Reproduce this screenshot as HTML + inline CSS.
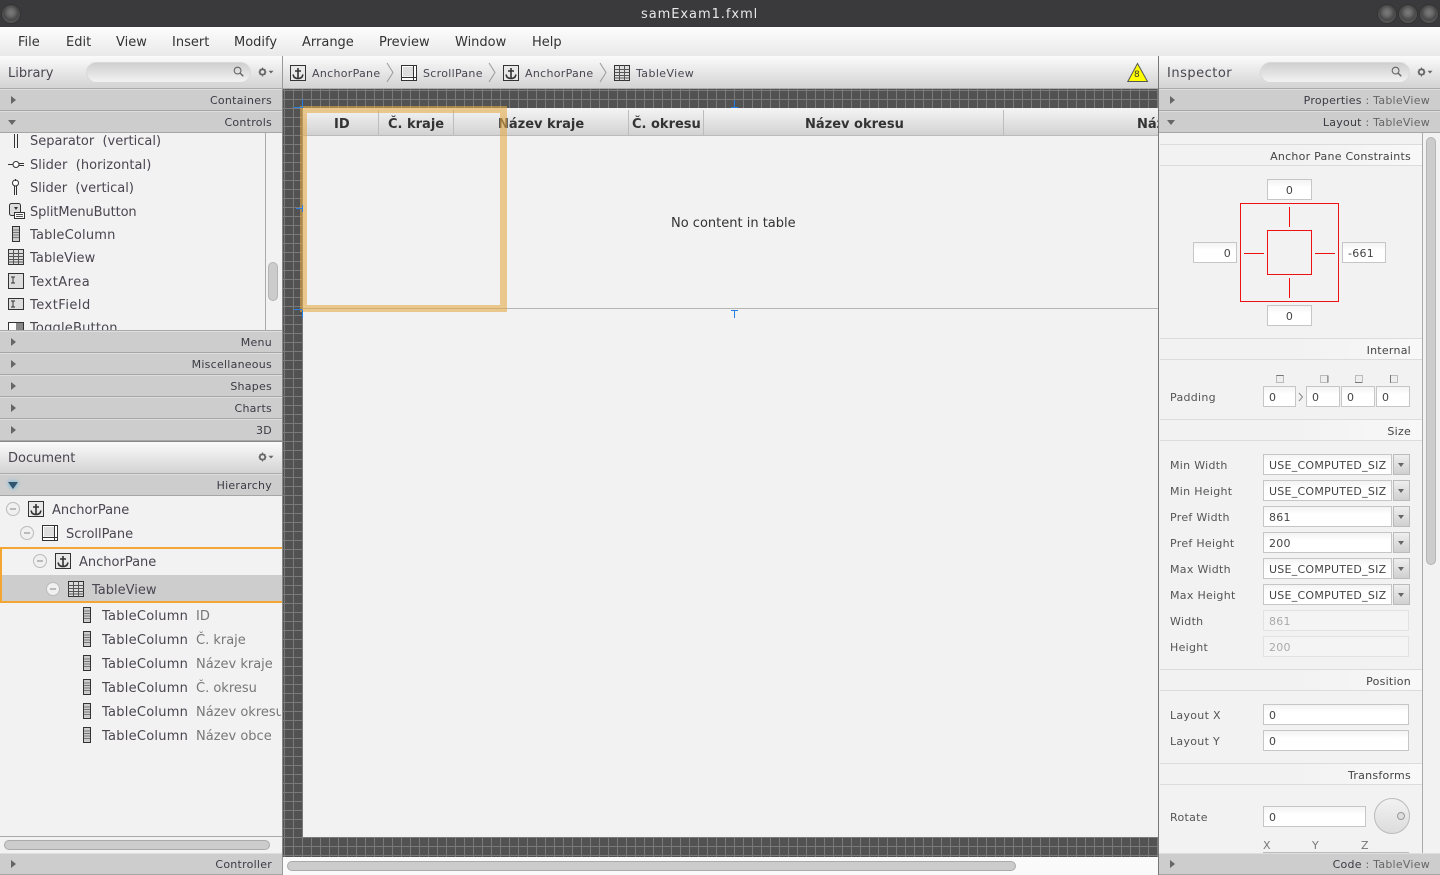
<!DOCTYPE html>
<html><head><meta charset="utf-8"><title>samExam1.fxml</title>
<style>
html,body{margin:0;padding:0;width:1440px;height:875px;overflow:hidden;background:#f2f2f2}
body{position:relative;font-family:"DejaVu Sans","Liberation Sans",sans-serif;color:#444}
div,span,svg{position:absolute;box-sizing:border-box}
.t{white-space:nowrap;font-size:13px;line-height:16px;color:#4a4550;margin-top:2px}
.m{top:33px;color:#333}
.sec{left:0;width:282px;height:22px;background:#cdcdcd;border-top:1px solid #dedede;border-bottom:1px solid #a6a6a6}
.sec .l{right:10px;top:4px;font-size:11px;line-height:14px;letter-spacing:.25px;white-space:nowrap;color:#3a3a44}
.sec .l i{font-style:normal;color:#666}
.tri{left:11px;top:6px;width:0;height:0;border-left:5px solid #666;border-top:4px solid transparent;border-bottom:4px solid transparent}
.trd{left:8px;top:8px;width:0;height:0;border-top:5px solid #666;border-left:4px solid transparent;border-right:4px solid transparent}
.hdr{background:linear-gradient(#fbfbfb,#d3d3d3);border-bottom:1px solid #aaa}
.search{height:21px;border:1px solid #d8d8d8;border-radius:11px;background:linear-gradient(#cfcfcf,#f2f2f2)}
.tb{top:117px;font-size:13px;font-weight:bold;color:#333;white-space:nowrap;line-height:16px}
.cs{top:110px;width:1px;height:25px;background:#bdbdbd}
.grp{left:1160px;width:262px;height:22px;background:linear-gradient(90deg,#f2f2f2 50%,#f8f8f8);border-top:1px solid #dcdcdc;border-bottom:1px solid #dcdcdc}
.grp span{right:11px;top:5px;font-size:11px;line-height:14px;letter-spacing:.25px;color:#444;white-space:nowrap}
.f{position:absolute;height:21px;background:linear-gradient(#f3f3f3,#fff 40%);border:1px solid #c6c6c6;font-size:11px;line-height:21px;padding-left:5px;color:#444;letter-spacing:.25px;white-space:nowrap;overflow:hidden}
.lb{left:1170px;margin-top:1px;font-size:11px;line-height:14px;color:#555;letter-spacing:.3px;white-space:nowrap}
.dd{left:1393px;width:17px;height:21px;background:linear-gradient(#eee,#d0d0d0);border:1px solid #bbb}
.dd:after{content:"";position:absolute;left:4px;top:8px;border-top:4px solid #666;border-left:3px solid transparent;border-right:3px solid transparent}
.dis{background:#f4f4f4;border-color:#e2e2e2;color:#aaa}
.red{background:#f00f0f}
.minus{width:14px;height:14px;border-radius:50%;border:1px solid #bbb;background:#f0f0f0}
.minus:after{content:"";position:absolute;left:3px;top:5px;width:6px;height:2px;background:#bbb}
.wb{top:4px;width:20px;height:20px;border-radius:50%;background:radial-gradient(circle at 50% 42%,#7c7c7c 0,#686868 28%,#484848 52%,#565656 74%,#4a4a4a 100%);border:1px solid #333}
.s0 span{letter-spacing:0}
</style></head>
<body>
<svg width="0" height="0" style="left:0;top:0">
<defs>
<symbol id="anc" viewBox="0 0 16 16"><rect x=".5" y=".5" width="15" height="15" fill="#e8e8e8" stroke="#333"/><path d="M8 3v10M5 6h6M3 9.500l1 2.500c1 1 3 1.500 4 1.500s3-.5 4-1.500l1-2.500" fill="none" stroke="#333" stroke-width="1.600"/></symbol>
<symbol id="scr" viewBox="0 0 16 16"><rect x=".5" y=".5" width="15" height="15" fill="#fff" stroke="#333"/><rect x="2" y="2" width="10" height="9.500" fill="#ddd"/><path d="M12.500 1v14M1 12.500h14" stroke="#333" fill="none"/></symbol>
<symbol id="tbl" viewBox="0 0 16 16"><rect x=".5" y=".5" width="15" height="15" fill="#ddd" stroke="#333"/><path d="M.5 4.500h15M.5 7.500h15M.5 10.500h15M.5 13h15M5.500 .5v15M10.500 .5v15" stroke="#555" fill="none"/></symbol>
<symbol id="col" viewBox="0 0 8 16"><rect x=".5" y=".5" width="7" height="15" fill="#ccc" stroke="#333"/><path d="M1 4h6M1 6.500h6M1 9h6M1 11.500h6" stroke="#777" fill="none"/></symbol>
<symbol id="gear" viewBox="0 0 16 10"><circle cx="4.500" cy="5" r="2.700" fill="none" stroke="#666" stroke-width="1.800"/><path d="M4.500 .5v1.500M4.500 8v1.500M.5 5h1.500M7 5h1.500M1.700 2.200l1 1M6.300 6.800l1 1M7.300 2.200l-1 1M2.700 6.800l-1 1" stroke="#666" stroke-width="1.100"/><path d="M10.500 3.800h5l-2.500 2.700z" fill="#666"/></symbol>
<symbol id="mag" viewBox="0 0 12 12"><circle cx="5" cy="5" r="3.700" fill="none" stroke="#666" stroke-width="1.200"/><path d="M7.800 7.800l3.400 3.400" stroke="#666" stroke-width="1.600"/></symbol>
</defs></svg>

<!-- title bar -->
<div style="left:0;top:0;width:1440px;height:27px;background:#3a3a3c"></div>
<div class="t" style="left:641px;top:5px;color:#e8e8e8;letter-spacing:.95px">samExam1.fxml</div>
<div class="wb" style="left:1px"></div>
<div class="wb" style="left:1377px"></div><div class="wb" style="left:1398px"></div><div class="wb" style="left:1419px"></div>

<!-- menu -->
<div style="left:0;top:27px;width:1440px;height:29px;background:linear-gradient(#fdfdfd,#e9e9e9)"></div>
<div class="t m" style="left:18px">File</div>
<div class="t m" style="left:66px">Edit</div>
<div class="t m" style="left:116px">View</div>
<div class="t m" style="left:172px">Insert</div>
<div class="t m" style="left:234px">Modify</div>
<div class="t m" style="left:302px">Arrange</div>
<div class="t m" style="left:379px">Preview</div>
<div class="t m" style="left:455px">Window</div>
<div class="t m" style="left:532px">Help</div>

<!-- left panel -->
<div style="left:0;top:56px;width:282px;height:819px;background:#f2f2f2"></div>
<div class="hdr" style="left:0;top:56px;width:282px;height:33px"></div>
<div class="t" style="left:8px;top:64px">Library</div>
<div class="search" style="left:86px;top:62px;width:165px"></div>
<svg style="left:233px;top:66px" width="11" height="11"><use href="#mag"/></svg>
<svg style="left:258px;top:67px" width="16" height="10"><use href="#gear"/></svg>

<div style="left:265px;top:133px;width:1px;height:198px;background:#aaa"></div>
<div style="left:268px;top:262px;width:10px;height:39px;border-radius:5px;background:#ccc;border:1px solid #b5b5b5"></div>

<div style="left:14px;top:134px;width:4px;height:14px;border-left:1px solid #333;border-right:1px solid #333"></div>
<div class="t" style="left:30px;top:132px">Separator&nbsp; (vertical)</div>
<svg style="left:8px;top:160px" width="16" height="9"><circle cx="8" cy="4.500" r="3" fill="#fff" stroke="#333"/><path d="M0 4.500h5M11 3.500h5M11 5.500h5" stroke="#333" fill="none"/></svg>
<div class="t" style="left:30px;top:156px;letter-spacing:.05px">Slider&nbsp; (horizontal)</div>
<svg style="left:11px;top:179px" width="9" height="16"><circle cx="4.500" cy="4" r="3" fill="#fff" stroke="#333"/><path d="M3.500 7v9M5.500 7v9M4.500 0v2" stroke="#333" fill="none"/></svg>
<div class="t" style="left:30px;top:179px">Slider&nbsp; (vertical)</div>
<svg style="left:9px;top:203px" width="16" height="16"><rect x=".5" y=".5" width="11" height="12" rx="2" fill="#ddd" stroke="#333"/><path d="M5 4h4l-2 3z" fill="#333"/><rect x="5.500" y="9.500" width="10" height="6" fill="#fff" stroke="#333"/><path d="M7 11.500h7M7 13.500h7" stroke="#555"/></svg>
<div class="t" style="left:30px;top:203px;letter-spacing:-.1px">SplitMenuButton</div>
<svg style="left:12px;top:226px" width="8" height="16"><use href="#col"/></svg>
<div class="t" style="left:30px;top:226px;letter-spacing:.2px">TableColumn</div>
<svg style="left:8px;top:249px" width="16" height="16"><use href="#tbl"/></svg>
<div class="t" style="left:30px;top:249px;letter-spacing:.1px">TableView</div>
<svg style="left:8px;top:273px" width="16" height="16"><rect x=".5" y=".5" width="15" height="15" fill="#ddd" stroke="#333"/><path d="M3 4h4M3 10h4M5 4v6" stroke="#333" fill="none"/></svg>
<div class="t" style="left:30px;top:273px;letter-spacing:.5px">TextArea</div>
<svg style="left:8px;top:298px" width="16" height="12"><rect x=".5" y=".5" width="15" height="11" fill="#ddd" stroke="#333"/><path d="M3 3h4M3 9h4M5 3v6" stroke="#333" fill="none"/></svg>
<div class="t" style="left:30px;top:296px;letter-spacing:.5px">TextField</div>
<svg style="left:8px;top:322px" width="16" height="9"><rect x=".5" y=".5" width="15" height="14" fill="#fff" stroke="#333"/><rect x="8" y="1" width="7" height="13" fill="#888"/></svg>
<div style="left:0;top:320px;width:265px;height:11px;overflow:hidden"><div class="t" style="left:30px;top:-1px;letter-spacing:.2px">ToggleButton</div></div>
<div style="left:0;top:330px;width:282px;height:1px;background:#aaa"></div>

<div class="sec" style="top:89px"><div class="tri"></div><div class="l">Containers</div></div>
<div class="sec" style="top:111px"><div class="trd"></div><div class="l">Controls</div></div>
<div class="sec" style="top:331px"><div class="tri"></div><div class="l">Menu</div></div>
<div class="sec" style="top:353px"><div class="tri"></div><div class="l">Miscellaneous</div></div>
<div class="sec" style="top:375px"><div class="tri"></div><div class="l">Shapes</div></div>
<div class="sec" style="top:397px"><div class="tri"></div><div class="l">Charts</div></div>
<div class="sec" style="top:419px"><div class="tri"></div><div class="l">3D</div></div>

<div class="hdr" style="left:0;top:441px;width:282px;height:33px;border-top:1px solid #888"></div>
<div class="t" style="left:8px;top:449px">Document</div>
<svg style="left:258px;top:452px" width="16" height="10"><use href="#gear"/></svg>
<div class="sec" style="top:474px"><div style="left:8px;top:7px;border-top:7px solid #33566e;border-left:5px solid transparent;border-right:5px solid transparent;filter:drop-shadow(0 0 2px #3fb0e8)"></div><div class="l">Hierarchy</div></div>

<div class="minus" style="left:6px;top:502px"></div>
<svg style="left:28px;top:501px" width="16" height="16"><use href="#anc"/></svg>
<div class="t" style="left:52px;top:501px">AnchorPane</div>
<div class="minus" style="left:20px;top:526px"></div>
<svg style="left:42px;top:525px" width="16" height="16"><use href="#scr"/></svg>
<div class="t" style="left:66px;top:525px">ScrollPane</div>
<div style="left:0;top:575px;width:282px;height:27px;background:#cdcdcd"></div>
<div style="left:0;top:547px;width:282px;height:56px;border:2px solid #f3a632;border-right:0"></div>
<div class="minus" style="left:33px;top:554px"></div>
<svg style="left:55px;top:553px" width="16" height="16"><use href="#anc"/></svg>
<div class="t" style="left:79px;top:553px">AnchorPane</div>
<div class="minus" style="left:46px;top:582px"></div>
<svg style="left:68px;top:581px" width="16" height="16"><use href="#tbl"/></svg>
<div class="t" style="left:92px;top:581px">TableView</div>

<svg style="left:83px;top:607px" width="8" height="16"><use href="#col"/></svg>
<div class="t s0" style="left:102px;top:607px;letter-spacing:.25px">TableColumn<span style="left:94px;top:0;color:#777">ID</span></div>
<svg style="left:83px;top:631px" width="8" height="16"><use href="#col"/></svg>
<div class="t s0" style="left:102px;top:631px;letter-spacing:.25px">TableColumn<span style="left:94px;top:0;color:#777">Č. kraje</span></div>
<svg style="left:83px;top:655px" width="8" height="16"><use href="#col"/></svg>
<div class="t s0" style="left:102px;top:655px;letter-spacing:.25px">TableColumn<span style="left:94px;top:0;color:#777">Název kraje</span></div>
<svg style="left:83px;top:679px" width="8" height="16"><use href="#col"/></svg>
<div class="t s0" style="left:102px;top:679px;letter-spacing:.25px">TableColumn<span style="left:94px;top:0;color:#777">Č. okresu</span></div>
<svg style="left:83px;top:703px" width="8" height="16"><use href="#col"/></svg>
<div style="left:0;top:700px;width:281px;height:24px;overflow:hidden"><div class="t s0" style="left:102px;top:3px;letter-spacing:.25px">TableColumn<span style="left:94px;top:0;color:#777">Název okresu</span></div></div>
<svg style="left:83px;top:727px" width="8" height="16"><use href="#col"/></svg>
<div class="t s0" style="left:102px;top:727px;letter-spacing:.25px">TableColumn<span style="left:94px;top:0;color:#777">Název obce</span></div>

<div style="left:0;top:836px;width:282px;height:18px;border-top:1px solid #aaa;background:#f2f2f2"></div>
<div style="left:4px;top:840px;width:266px;height:10px;border-radius:5px;background:#ccc;border:1px solid #aaa"></div>
<div class="sec" style="top:853px"><div class="tri"></div><div class="l">Controller</div></div>

<!-- center -->
<div class="hdr" style="left:282px;top:56px;width:877px;height:33px;border-left:1px solid #999"></div>
<svg style="left:290px;top:65px" width="16" height="16"><use href="#anc"/></svg>
<div class="t" style="left:312px;top:65px;font-size:11px;line-height:14px;letter-spacing:.3px">AnchorPane</div>
<svg style="left:386px;top:62px" width="8" height="21"><path d="M1 1l6 9.500-6 9.500" fill="none" stroke="#999"/></svg>
<svg style="left:401px;top:65px" width="16" height="16"><use href="#scr"/></svg>
<div class="t" style="left:423px;top:65px;font-size:11px;line-height:14px;letter-spacing:.3px">ScrollPane</div>
<svg style="left:488px;top:62px" width="8" height="21"><path d="M1 1l6 9.500-6 9.500" fill="none" stroke="#999"/></svg>
<svg style="left:503px;top:65px" width="16" height="16"><use href="#anc"/></svg>
<div class="t" style="left:525px;top:65px;font-size:11px;line-height:14px;letter-spacing:.3px">AnchorPane</div>
<svg style="left:599px;top:62px" width="8" height="21"><path d="M1 1l6 9.500-6 9.500" fill="none" stroke="#999"/></svg>
<svg style="left:614px;top:65px" width="16" height="16"><use href="#tbl"/></svg>
<div class="t" style="left:636px;top:65px;font-size:11px;line-height:14px;letter-spacing:.4px">TableView</div>
<svg style="left:1127px;top:62px" width="22" height="21"><path d="M10.500 1.500L20.500 19.500H.8z" fill="#ff0" stroke="#555"/></svg>
<div class="t" style="left:1134px;top:67px;font-size:9px;line-height:12px;color:#333">8</div>

<!-- workspace -->
<div style="left:282px;top:89px;width:877px;height:768px;border-left:1px solid #888;background-color:#525252;background-image:linear-gradient(#7a7a7a 1px,transparent 1px),linear-gradient(90deg,#7a7a7a 1px,transparent 1px);background-size:9px 9px;background-position:1px 1px"></div>
<div style="left:303px;top:108px;width:856px;height:729px;background:#f2f2f2"></div>
<div style="left:303px;top:110px;width:856px;height:26px;background:linear-gradient(#f2f2f2,#d2d2d2);border-bottom:1px solid #bbb"></div>
<div class="cs" style="left:378px"></div><div class="cs" style="left:453px"></div><div class="cs" style="left:628px"></div><div class="cs" style="left:703px"></div><div class="cs" style="left:1003px"></div>
<div class="tb" style="left:334px">ID</div>
<div class="tb" style="left:388px">Č. kraje</div>
<div class="tb" style="left:498px">Název kraje</div>
<div class="tb" style="left:632px">Č. okresu</div>
<div class="tb" style="left:805px">Název okresu</div>
<div class="tb" style="left:1137px;width:21px;overflow:hidden">Název obce</div>
<div class="t" style="left:671px;top:214px;color:#333">No content in table</div>
<div style="left:303px;top:308px;width:856px;height:1px;background:#b5b5b5"></div>
<div style="left:300px;top:106px;width:207px;height:206px;border:7px solid rgba(229,172,73,.6)"></div>
<div style="left:302px;top:99px;width:1px;height:9px;background:#2a7de0"></div>
<div style="left:294px;top:107px;width:8px;height:1px;background:#2a7de0"></div>
<div style="left:734px;top:100px;width:1px;height:8px;background:#2a7de0"></div>
<div style="left:731px;top:107px;width:7px;height:1px;background:#2a7de0"></div>
<div style="left:296px;top:208px;width:7px;height:1px;background:#2a7de0"></div>
<div style="left:302px;top:205px;width:1px;height:7px;background:#2a7de0"></div>
<div style="left:734px;top:310px;width:1px;height:8px;background:#2a7de0"></div>
<div style="left:731px;top:310px;width:7px;height:1px;background:#2a7de0"></div>
<div style="left:294px;top:309px;width:8px;height:1px;background:#2a7de0"></div>
<div style="left:302px;top:310px;width:1px;height:8px;background:#2a7de0"></div>

<div style="left:282px;top:857px;width:877px;height:18px;background:#fafafa;border-left:1px solid #999"></div>
<div style="left:287px;top:861px;width:729px;height:10px;border-radius:5px;background:#ccc;border:1px solid #aaa"></div>

<!-- inspector -->
<div style="left:1158px;top:56px;width:282px;height:819px;background:#f2f2f2;border-left:1px solid #777"></div>
<div class="hdr" style="left:1159px;top:56px;width:281px;height:33px"></div>
<div class="t" style="left:1167px;top:64px;letter-spacing:.5px">Inspector</div>
<div class="search" style="left:1260px;top:62px;width:150px"></div>
<svg style="left:1391px;top:66px" width="11" height="11"><use href="#mag"/></svg>
<svg style="left:1417px;top:67px" width="16" height="10"><use href="#gear"/></svg>
<div class="sec" style="left:1159px;top:89px;width:281px"><div class="tri"></div><div class="l">Properties <i>: TableView</i></div></div>
<div class="sec" style="left:1159px;top:111px;width:281px"><div class="trd"></div><div class="l">Layout <i>: TableView</i></div></div>

<div style="left:1422px;top:133px;width:1px;height:720px;background:#aaa"></div>
<div style="left:1426px;top:137px;width:10px;height:428px;border-radius:5px;background:#ccc;border:1px solid #b5b5b5"></div>

<div class="grp" style="top:144px;height:22px"><span>Anchor Pane Constraints</span></div>
<div class="f" style="left:1267px;top:179px;width:45px;text-align:center;padding:0">0</div>
<div class="f" style="left:1193px;top:242px;width:44px;text-align:right;padding:0 5px 0 0">0</div>
<div class="f" style="left:1342px;top:242px;width:44px">-661</div>
<div class="f" style="left:1267px;top:305px;width:45px;text-align:center;padding:0">0</div>
<div style="left:1240px;top:203px;width:99px;height:99px;border:1px solid #ee1111"></div>
<div style="left:1267px;top:230px;width:45px;height:45px;border:1px solid #ee1111"></div>
<div class="red" style="left:1289px;top:207px;width:1px;height:20px"></div>
<div class="red" style="left:1289px;top:278px;width:1px;height:20px"></div>
<div class="red" style="left:1244px;top:253px;width:20px;height:1px"></div>
<div class="red" style="left:1315px;top:253px;width:20px;height:1px"></div>

<div class="grp" style="top:338px"><span>Internal</span></div>
<svg style="left:1276px;top:375px" width="125" height="9"><rect x=".5" y=".5" width="7" height="7" fill="#eee" stroke="#bbb"/><path d="M.5 .5h7" stroke="#777"/><rect x="44.500" y=".5" width="7" height="7" fill="#eee" stroke="#bbb"/><path d="M52 .5v7" stroke="#777"/><rect x="79.500" y=".5" width="7" height="7" fill="#eee" stroke="#bbb"/><path d="M79 7.500h7" stroke="#777"/><rect x="114.500" y=".5" width="7" height="7" fill="#eee" stroke="#bbb"/><path d="M114.500 0v8" stroke="#777"/></svg>
<div class="lb" style="top:390px">Padding</div>
<div class="f" style="left:1263px;top:386px;width:33px">0</div>
<svg style="left:1298px;top:392px" width="6" height="10"><path d="M1 1l3.500 4-3.500 4" fill="none" stroke="#888"/></svg>
<div class="f" style="left:1306px;top:386px;width:34px">0</div>
<div class="f" style="left:1341px;top:386px;width:34px">0</div>
<div class="f" style="left:1376px;top:386px;width:34px">0</div>

<div class="grp" style="top:419px"><span>Size</span></div>
<div class="lb" style="top:458px">Min Width</div><div class="f" style="left:1263px;top:454px;width:129px">USE_COMPUTED_SIZ</div><div class="dd" style="top:454px"></div>
<div class="lb" style="top:484px">Min Height</div><div class="f" style="left:1263px;top:480px;width:129px">USE_COMPUTED_SIZ</div><div class="dd" style="top:480px"></div>
<div class="lb" style="top:510px">Pref Width</div><div class="f" style="left:1263px;top:506px;width:129px">861</div><div class="dd" style="top:506px"></div>
<div class="lb" style="top:536px">Pref Height</div><div class="f" style="left:1263px;top:532px;width:129px">200</div><div class="dd" style="top:532px"></div>
<div class="lb" style="top:562px">Max Width</div><div class="f" style="left:1263px;top:558px;width:129px">USE_COMPUTED_SIZ</div><div class="dd" style="top:558px"></div>
<div class="lb" style="top:588px">Max Height</div><div class="f" style="left:1263px;top:584px;width:129px">USE_COMPUTED_SIZ</div><div class="dd" style="top:584px"></div>
<div class="lb" style="top:614px">Width</div><div class="f dis" style="left:1263px;top:610px;width:146px">861</div>
<div class="lb" style="top:640px">Height</div><div class="f dis" style="left:1263px;top:636px;width:146px">200</div>

<div class="grp" style="top:669px"><span>Position</span></div>
<div class="lb" style="top:708px">Layout X</div><div class="f" style="left:1263px;top:704px;width:146px">0</div>
<div class="lb" style="top:734px">Layout Y</div><div class="f" style="left:1263px;top:730px;width:146px">0</div>

<div class="grp" style="top:763px"><span>Transforms</span></div>
<div class="lb" style="top:810px">Rotate</div><div class="f" style="left:1263px;top:806px;width:103px">0</div>
<div style="left:1374px;top:798px;width:36px;height:36px;border-radius:50%;border:1px solid #bbb;background:linear-gradient(#f2f2f2,#dcdcdc)"></div>
<div style="left:1397px;top:812px;width:8px;height:8px;border-radius:50%;border:1px solid #999;background:#ddd"></div>
<div class="lb" style="left:1263px;top:838px;color:#777">X</div>
<div class="lb" style="left:1312px;top:838px;color:#777">Y</div>
<div class="lb" style="left:1361px;top:838px;color:#777">Z</div>
<div style="left:1263px;top:852px;width:146px;height:2px;background:#bbb"></div>
<div class="sec" style="left:1159px;top:853px;width:281px"><div class="tri"></div><div class="l">Code <i>: TableView</i></div></div>
</body></html>
